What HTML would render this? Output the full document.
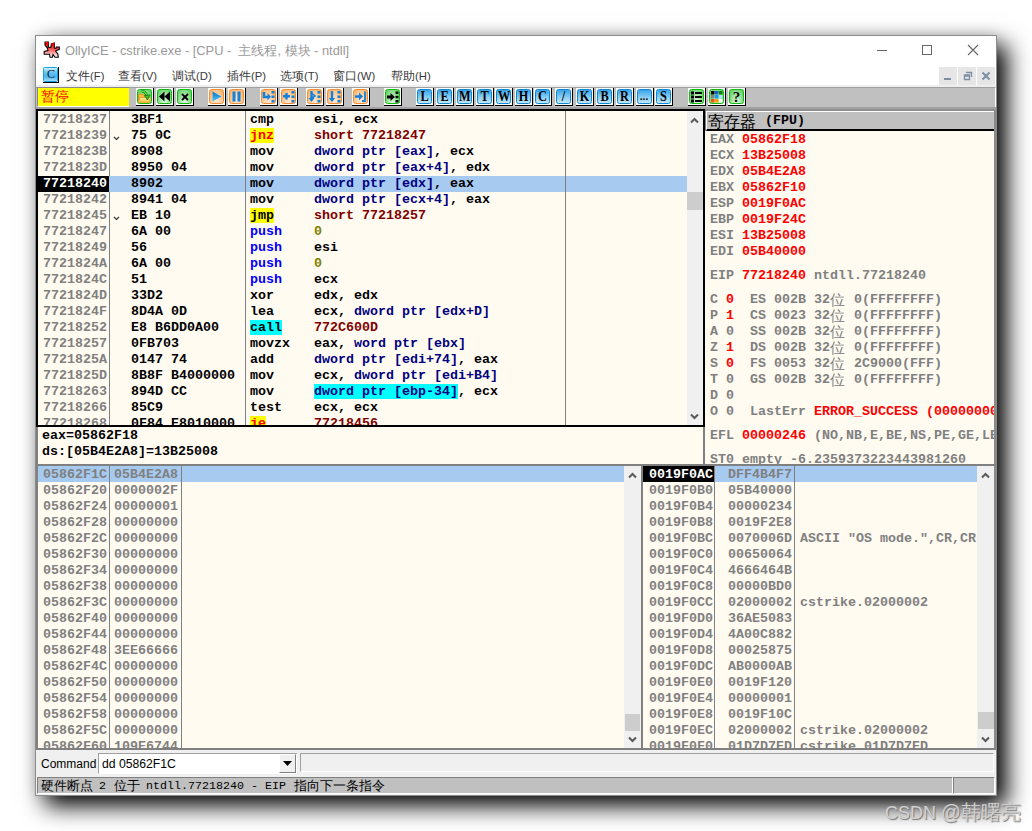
<!DOCTYPE html><html><head><meta charset="utf-8"><style>
html,body{margin:0;padding:0;}
body{width:1032px;height:831px;overflow:hidden;background:#fff;position:relative;font-family:"Liberation Sans",sans-serif;}
div{box-sizing:border-box;}
.m{position:absolute;font-family:"Liberation Mono",monospace;font-weight:bold;font-size:13.333px;line-height:16px;height:16px;white-space:pre;}
.s{position:absolute;white-space:pre;}
</style></head><body>
<div style="position:absolute;left:35px;top:35px;width:962px;height:761px;background:#fff;border:1px solid #8c8c8c;box-shadow:10px 10px 22px rgba(0,0,0,1),0 0 14px rgba(0,0,0,0.10);"></div>
<svg style="position:absolute;left:42px;top:40px" width="20" height="20" viewBox="0 0 20 20">
<defs><linearGradient id="ast" x1="0" y1="0" x2="0" y2="1"><stop offset="0" stop-color="#ff0000"/><stop offset="0.45" stop-color="#ff5050"/><stop offset="1" stop-color="#ffffff"/></linearGradient></defs>
<path d="M3 2 L6.3 2 L6.3 7 L8.8 7.5 L9.3 4 L12.3 3 L12.3 8 L14 8.3 L14.3 7 L17.3 7 L17.3 9.3 L13.5 11 L15.8 14 L16.3 17.3 L13 17.3 L11 14.5 L10.3 17.3 L8 17.3 L7.5 14.3 L2.2 14.3 L2.2 11.5 L6 10.5 L5.5 8.3 L3 5 Z" fill="url(#ast)" stroke="#000" stroke-width="1.1" stroke-linejoin="miter"/>
<path d="M3 2 L6.3 2 L6.3 5 L4.5 4.5Z M9.5 3.3 L12.3 3 L12.3 6 L10 6Z" fill="#ff0000"/>
</svg>
<div class="s" style="left:65px;top:42px;font-size:12.85px;line-height:17px;color:#999;">OllyICE - cstrike.exe - [CPU -&nbsp; 主线程, 模块 - ntdll]</div>
<div style="position:absolute;left:877px;top:50px;width:10px;height:1px;background:#666;"></div>
<div style="position:absolute;left:922px;top:45px;width:10px;height:10px;border:1px solid #666;"></div>
<svg style="position:absolute;left:967px;top:44px" width="12" height="12" viewBox="0 0 12 12"><path d="M1 1 L11 11 M11 1 L1 11" stroke="#666" stroke-width="1.1"/></svg>
<div style="position:absolute;left:43px;top:67px;width:16px;height:16px;border-right:1px solid #000;border-bottom:1px solid #000;"><div style="position:absolute;left:0;top:0;width:15px;height:15px;border:1px solid #12a0ea;border-radius:1.5px;background:linear-gradient(#d8f2fd,#6cc8f4 30%,#48b4ee 65%,#a8dcf8);"></div></div>
<div class="s" style="left:47px;top:67px;font-family:'Liberation Serif',serif;font-weight:normal;font-size:12px;line-height:15px;color:#102030;">C</div>
<div class="s" style="left:66px;top:68px;font-size:12.3px;line-height:17px;color:#3a3a3a;">文件<span style="font-size:11.3px;">(F)</span></div>
<div class="s" style="left:118px;top:68px;font-size:12.3px;line-height:17px;color:#3a3a3a;">查看<span style="font-size:11.3px;">(V)</span></div>
<div class="s" style="left:172px;top:68px;font-size:12.3px;line-height:17px;color:#3a3a3a;">调试<span style="font-size:11.3px;">(D)</span></div>
<div class="s" style="left:227px;top:68px;font-size:12.3px;line-height:17px;color:#3a3a3a;">插件<span style="font-size:11.3px;">(P)</span></div>
<div class="s" style="left:280px;top:68px;font-size:12.3px;line-height:17px;color:#3a3a3a;">选项<span style="font-size:11.3px;">(T)</span></div>
<div class="s" style="left:333px;top:68px;font-size:12.3px;line-height:17px;color:#3a3a3a;">窗口<span style="font-size:11.3px;">(W)</span></div>
<div class="s" style="left:391px;top:68px;font-size:12.3px;line-height:17px;color:#3a3a3a;">帮助<span style="font-size:11.3px;">(H)</span></div>
<div style="position:absolute;left:939px;top:67px;width:18px;height:18px;background:#e6e6e6;"></div>
<div style="position:absolute;left:958px;top:67px;width:18px;height:18px;background:#e6e6e6;"></div>
<div style="position:absolute;left:977px;top:67px;width:18px;height:18px;background:#e6e6e6;"></div>
<div style="position:absolute;left:944px;top:78px;width:7px;height:2px;background:#7d8ea3;"></div>
<svg style="position:absolute;left:963px;top:71px" width="10" height="10" viewBox="0 0 10 10"><path d="M3 1.5 H8.5 V6 M1.5 4 H6.5 V8.5 H1.5 Z M1.5 5 H6.5" stroke="#7d8ea3" stroke-width="1.3" fill="none"/></svg>
<svg style="position:absolute;left:981px;top:71px" width="10" height="10" viewBox="0 0 10 10"><path d="M1.5 1.5 L8.5 8.5 M8.5 1.5 L1.5 8.5" stroke="#7d8ea3" stroke-width="2"/></svg>
<div style="position:absolute;left:36px;top:85px;width:960px;height:2px;background:#eeeeee;"></div>
<div style="position:absolute;left:36px;top:87px;width:960px;height:21px;background:#c0c0c0;border-top:1px solid #a0a0a0;border-bottom:1px solid #fff;border-right:1px solid #fff;"></div>
<div style="position:absolute;left:37px;top:87px;width:92px;height:20px;background:#ffff00;border-top:1px solid #888;border-left:1px solid #888;border-bottom:1px solid #fff;"></div>
<div class="s" style="left:41px;top:87px;font-size:14px;line-height:18px;color:#ff0000;">暂停</div>
<div style="position:absolute;left:136px;top:88px;width:18px;height:18px;background:#fff;border-right:1px solid #000;border-bottom:1px solid #000;"><div style="position:absolute;left:1px;top:1px;width:15px;height:15px;border:1px solid #10b810;border-radius:2.5px;background:radial-gradient(ellipse at 50% 100%,#e0f8e0 0%,#a8e8a8 45%,#50cc50 100%);overflow:hidden;"><svg width="13" height="13" style="position:absolute;left:0;top:0"><defs><linearGradient id="fo" x1="0" y1="0" x2="0" y2="1"><stop offset="0" stop-color="#fff0a0"/><stop offset="1" stop-color="#f0b830"/></linearGradient></defs><path d="M0.5 13 V5 Q0.5 4 1.5 4 H4 L5 5 H7 V13Z" fill="#f0c040" stroke="#d89010" stroke-width="0.9"/><path d="M1.5 7.5 H12.5 L11.5 13 H0.5Z" fill="url(#fo)" stroke="#e0a020" stroke-width="0.9"/><path d="M3.5 1.5 Q7.5 1 9 6" stroke="#108010" stroke-width="2.6" fill="none"/><path d="M3.5 1.5 Q7.5 1 9 6" stroke="#60e040" stroke-width="1.2" fill="none"/><path d="M6.5 5.5 L12 5 L9.5 10Z" fill="#40c030" stroke="#107010" stroke-width="0.8"/></svg></div></div>
<div style="position:absolute;left:156px;top:88px;width:18px;height:18px;background:#fff;border-right:1px solid #000;border-bottom:1px solid #000;"><div style="position:absolute;left:1px;top:1px;width:15px;height:15px;border:1px solid #10b810;border-radius:2.5px;background:radial-gradient(ellipse at 50% 100%,#e0f8e0 0%,#a8e8a8 45%,#50cc50 100%);overflow:hidden;"><svg width="13" height="13" style="position:absolute;left:0;top:0"><path d="M6.5 1.5 L1 6.5 L6.5 11.5Z M12 1.5 L6.5 6.5 L12 11.5Z" fill="#000"/></svg></div></div>
<div style="position:absolute;left:176px;top:88px;width:18px;height:18px;background:#fff;border-right:1px solid #000;border-bottom:1px solid #000;"><div style="position:absolute;left:1px;top:1px;width:15px;height:15px;border:1px solid #10b810;border-radius:2.5px;background:radial-gradient(ellipse at 50% 100%,#e0f8e0 0%,#a8e8a8 45%,#50cc50 100%);overflow:hidden;"><svg width="14" height="14" style="position:absolute;left:0;top:0"><path d="M4 4 L10 10 M10 4 L4 10" stroke="#000" stroke-width="1.8"/></svg></div></div>
<div style="position:absolute;left:208px;top:88px;width:18px;height:18px;background:#fff;border-right:1px solid #000;border-bottom:1px solid #000;"><div style="position:absolute;left:1px;top:1px;width:15px;height:15px;border:1px solid #f28c34;border-radius:2.5px;background:radial-gradient(ellipse at 50% 85%,#fee8d4 0%,#fbcc9a 55%,#f5aa5c 100%);overflow:hidden;"><svg width="13" height="13" style="position:absolute;left:0;top:0"><defs><linearGradient id="bl" x1="0" y1="0" x2="0" y2="1"><stop offset="0" stop-color="#0870c8"/><stop offset="1" stop-color="#50c8f8"/></linearGradient></defs><path d="M2.5 1.5 L11.5 6.5 L2.5 11.5Z" fill="url(#bl)"/></svg></div></div>
<div style="position:absolute;left:228px;top:88px;width:18px;height:18px;background:#fff;border-right:1px solid #000;border-bottom:1px solid #000;"><div style="position:absolute;left:1px;top:1px;width:15px;height:15px;border:1px solid #f28c34;border-radius:2.5px;background:radial-gradient(ellipse at 50% 85%,#fee8d4 0%,#fbcc9a 55%,#f5aa5c 100%);overflow:hidden;"><svg width="13" height="13" style="position:absolute;left:0;top:0"><rect x="2.5" y="1.5" width="3" height="10" fill="#1580d8"/><rect x="7.5" y="1.5" width="3" height="10" fill="#1580d8"/></svg></div></div>
<div style="position:absolute;left:260px;top:88px;width:18px;height:18px;background:#fff;border-right:1px solid #000;border-bottom:1px solid #000;"><div style="position:absolute;left:1px;top:1px;width:15px;height:15px;border:1px solid #f28c34;border-radius:2.5px;background:radial-gradient(ellipse at 50% 85%,#fee8d4 0%,#fbcc9a 55%,#f5aa5c 100%);overflow:hidden;"><svg width="13" height="13" style="position:absolute;left:0;top:0"><path d="M2 2 v5 h4" stroke="#1580d8" stroke-width="2.6" fill="none"/><path d="M5.5 3 L9 6.8 L5.5 10.5Z" fill="#1580d8"/><rect x="9.5" y="1" width="3" height="2.5" fill="#1580d8"/><rect x="9.5" y="5.5" width="3" height="2.5" fill="#1580d8"/><rect x="9.5" y="10" width="3" height="2.5" fill="#1580d8"/></svg></div></div>
<div style="position:absolute;left:280px;top:88px;width:18px;height:18px;background:#fff;border-right:1px solid #000;border-bottom:1px solid #000;"><div style="position:absolute;left:1px;top:1px;width:15px;height:15px;border:1px solid #f28c34;border-radius:2.5px;background:radial-gradient(ellipse at 50% 85%,#fee8d4 0%,#fbcc9a 55%,#f5aa5c 100%);overflow:hidden;"><svg width="13" height="13" style="position:absolute;left:0;top:0"><path d="M1 6.3 h7 M4.5 3 v6.5" stroke="#1580d8" stroke-width="2.4"/><rect x="9.5" y="1" width="3" height="2.5" fill="#1580d8"/><rect x="9.5" y="5.5" width="3" height="2.5" fill="#1580d8"/><rect x="9.5" y="10" width="3" height="2.5" fill="#1580d8"/></svg></div></div>
<div style="position:absolute;left:306px;top:88px;width:18px;height:18px;background:#fff;border-right:1px solid #000;border-bottom:1px solid #000;"><div style="position:absolute;left:1px;top:1px;width:15px;height:15px;border:1px solid #f28c34;border-radius:2.5px;background:radial-gradient(ellipse at 50% 85%,#fee8d4 0%,#fbcc9a 55%,#f5aa5c 100%);overflow:hidden;"><svg width="13" height="13" style="position:absolute;left:0;top:0"><path d="M3.5 1 v8" stroke="#1580d8" stroke-width="2.4"/><path d="M0.5 8 L3.5 12 L6.5 8Z" fill="#1580d8"/><path d="M4 3.5 L7 6 L4 8" stroke="#1580d8" stroke-width="1.6" fill="none"/><rect x="9.5" y="1" width="3" height="2.5" fill="#1580d8"/><rect x="9.5" y="5.5" width="3" height="2.5" fill="#1580d8"/><rect x="9.5" y="10" width="3" height="2.5" fill="#1580d8"/></svg></div></div>
<div style="position:absolute;left:326px;top:88px;width:18px;height:18px;background:#fff;border-right:1px solid #000;border-bottom:1px solid #000;"><div style="position:absolute;left:1px;top:1px;width:15px;height:15px;border:1px solid #f28c34;border-radius:2.5px;background:radial-gradient(ellipse at 50% 85%,#fee8d4 0%,#fbcc9a 55%,#f5aa5c 100%);overflow:hidden;"><svg width="13" height="13" style="position:absolute;left:0;top:0"><path d="M4 1 v8" stroke="#1580d8" stroke-width="2.4"/><path d="M0.8 8 L4 12 L7.2 8Z" fill="#1580d8"/><rect x="9.5" y="1" width="3" height="2.5" fill="#1580d8"/><rect x="9.5" y="5.5" width="3" height="2.5" fill="#1580d8"/><rect x="9.5" y="10" width="3" height="2.5" fill="#1580d8"/></svg></div></div>
<div style="position:absolute;left:352px;top:88px;width:18px;height:18px;background:#fff;border-right:1px solid #000;border-bottom:1px solid #000;"><div style="position:absolute;left:1px;top:1px;width:15px;height:15px;border:1px solid #f28c34;border-radius:2.5px;background:radial-gradient(ellipse at 50% 85%,#fee8d4 0%,#fbcc9a 55%,#f5aa5c 100%);overflow:hidden;"><svg width="13" height="13" style="position:absolute;left:0;top:0"><path d="M1 6.5 h5" stroke="#1580d8" stroke-width="2.6"/><path d="M5 2.5 L9 6.5 L5 10.5Z" fill="#1580d8"/><path d="M11 1.5 v9.5 h-3" stroke="#1580d8" stroke-width="1.8" fill="none"/></svg></div></div>
<div style="position:absolute;left:384px;top:88px;width:18px;height:18px;background:#fff;border-right:1px solid #000;border-bottom:1px solid #000;"><div style="position:absolute;left:1px;top:1px;width:15px;height:15px;border:1px solid #10b810;border-radius:2.5px;background:radial-gradient(ellipse at 50% 100%,#e0f8e0 0%,#a8e8a8 45%,#50cc50 100%);overflow:hidden;"><svg width="13" height="13" style="position:absolute;left:0;top:0"><path d="M1 7 h4.5" stroke="#000" stroke-width="3"/><path d="M4.5 3 L9 7 L4.5 11Z" fill="#000"/><rect x="9.5" y="1.5" width="3" height="2.5" fill="#000"/><rect x="9.5" y="5.8" width="3" height="2.5" fill="#000"/><rect x="9.5" y="10" width="3" height="2.5" fill="#000"/></svg></div></div>
<div style="position:absolute;left:416px;top:88px;width:18px;height:18px;background:#fff;border-right:1px solid #000;border-bottom:1px solid #000;"><div style="position:absolute;left:1px;top:1px;width:15px;height:15px;border:1px solid #0a86d6;border-radius:2.5px;background:linear-gradient(#3aa4ea,#8ed0f6 60%,#c4e8fb);overflow:hidden;"><div style="position:absolute;left:0;top:-1px;width:13px;height:14px;text-align:center;font-family:'Liberation Serif',serif;font-weight:bold;font-size:14.5px;line-height:14px;color:#000;transform:scaleX(0.85);">L</div></div></div>
<div style="position:absolute;left:436px;top:88px;width:18px;height:18px;background:#fff;border-right:1px solid #000;border-bottom:1px solid #000;"><div style="position:absolute;left:1px;top:1px;width:15px;height:15px;border:1px solid #0a86d6;border-radius:2.5px;background:linear-gradient(#3aa4ea,#8ed0f6 60%,#c4e8fb);overflow:hidden;"><div style="position:absolute;left:0;top:-1px;width:13px;height:14px;text-align:center;font-family:'Liberation Serif',serif;font-weight:bold;font-size:14.5px;line-height:14px;color:#000;transform:scaleX(0.85);">E</div></div></div>
<div style="position:absolute;left:456px;top:88px;width:18px;height:18px;background:#fff;border-right:1px solid #000;border-bottom:1px solid #000;"><div style="position:absolute;left:1px;top:1px;width:15px;height:15px;border:1px solid #0a86d6;border-radius:2.5px;background:linear-gradient(#3aa4ea,#8ed0f6 60%,#c4e8fb);overflow:hidden;"><div style="position:absolute;left:0;top:-1px;width:13px;height:14px;text-align:center;font-family:'Liberation Serif',serif;font-weight:bold;font-size:14.5px;line-height:14px;color:#000;transform:scaleX(0.85);">M</div></div></div>
<div style="position:absolute;left:476px;top:88px;width:18px;height:18px;background:#fff;border-right:1px solid #000;border-bottom:1px solid #000;"><div style="position:absolute;left:1px;top:1px;width:15px;height:15px;border:1px solid #0a86d6;border-radius:2.5px;background:linear-gradient(#3aa4ea,#8ed0f6 60%,#c4e8fb);overflow:hidden;"><div style="position:absolute;left:0;top:-1px;width:13px;height:14px;text-align:center;font-family:'Liberation Serif',serif;font-weight:bold;font-size:14.5px;line-height:14px;color:#000;transform:scaleX(0.85);">T</div></div></div>
<div style="position:absolute;left:495px;top:88px;width:18px;height:18px;background:#fff;border-right:1px solid #000;border-bottom:1px solid #000;"><div style="position:absolute;left:1px;top:1px;width:15px;height:15px;border:1px solid #0a86d6;border-radius:2.5px;background:linear-gradient(#3aa4ea,#8ed0f6 60%,#c4e8fb);overflow:hidden;"><div style="position:absolute;left:0;top:-1px;width:13px;height:14px;text-align:center;font-family:'Liberation Serif',serif;font-weight:bold;font-size:14.5px;line-height:14px;color:#000;transform:scaleX(0.85);">W</div></div></div>
<div style="position:absolute;left:515px;top:88px;width:18px;height:18px;background:#fff;border-right:1px solid #000;border-bottom:1px solid #000;"><div style="position:absolute;left:1px;top:1px;width:15px;height:15px;border:1px solid #0a86d6;border-radius:2.5px;background:linear-gradient(#3aa4ea,#8ed0f6 60%,#c4e8fb);overflow:hidden;"><div style="position:absolute;left:0;top:-1px;width:13px;height:14px;text-align:center;font-family:'Liberation Serif',serif;font-weight:bold;font-size:14.5px;line-height:14px;color:#000;transform:scaleX(0.85);">H</div></div></div>
<div style="position:absolute;left:534px;top:88px;width:18px;height:18px;background:#fff;border-right:1px solid #000;border-bottom:1px solid #000;"><div style="position:absolute;left:1px;top:1px;width:15px;height:15px;border:1px solid #0a86d6;border-radius:2.5px;background:linear-gradient(#3aa4ea,#8ed0f6 60%,#c4e8fb);overflow:hidden;"><div style="position:absolute;left:0;top:-1px;width:13px;height:14px;text-align:center;font-family:'Liberation Serif',serif;font-weight:bold;font-size:14.5px;line-height:14px;color:#000;transform:scaleX(0.85);">C</div></div></div>
<div style="position:absolute;left:555px;top:88px;width:18px;height:18px;background:#fff;border-right:1px solid #000;border-bottom:1px solid #000;"><div style="position:absolute;left:1px;top:1px;width:15px;height:15px;border:1px solid #0a86d6;border-radius:2.5px;background:linear-gradient(#3aa4ea,#8ed0f6 60%,#c4e8fb);overflow:hidden;"><div style="position:absolute;left:0;top:-1px;width:13px;height:14px;text-align:center;font-family:'Liberation Serif',serif;font-weight:bold;font-size:14.5px;line-height:14px;color:#000;transform:scaleX(0.85);">/</div></div></div>
<div style="position:absolute;left:576px;top:88px;width:18px;height:18px;background:#fff;border-right:1px solid #000;border-bottom:1px solid #000;"><div style="position:absolute;left:1px;top:1px;width:15px;height:15px;border:1px solid #0a86d6;border-radius:2.5px;background:linear-gradient(#3aa4ea,#8ed0f6 60%,#c4e8fb);overflow:hidden;"><div style="position:absolute;left:0;top:-1px;width:13px;height:14px;text-align:center;font-family:'Liberation Serif',serif;font-weight:bold;font-size:14.5px;line-height:14px;color:#000;transform:scaleX(0.85);">K</div></div></div>
<div style="position:absolute;left:596px;top:88px;width:18px;height:18px;background:#fff;border-right:1px solid #000;border-bottom:1px solid #000;"><div style="position:absolute;left:1px;top:1px;width:15px;height:15px;border:1px solid #0a86d6;border-radius:2.5px;background:linear-gradient(#3aa4ea,#8ed0f6 60%,#c4e8fb);overflow:hidden;"><div style="position:absolute;left:0;top:-1px;width:13px;height:14px;text-align:center;font-family:'Liberation Serif',serif;font-weight:bold;font-size:14.5px;line-height:14px;color:#000;transform:scaleX(0.85);">B</div></div></div>
<div style="position:absolute;left:616px;top:88px;width:18px;height:18px;background:#fff;border-right:1px solid #000;border-bottom:1px solid #000;"><div style="position:absolute;left:1px;top:1px;width:15px;height:15px;border:1px solid #0a86d6;border-radius:2.5px;background:linear-gradient(#3aa4ea,#8ed0f6 60%,#c4e8fb);overflow:hidden;"><div style="position:absolute;left:0;top:-1px;width:13px;height:14px;text-align:center;font-family:'Liberation Serif',serif;font-weight:bold;font-size:14.5px;line-height:14px;color:#000;transform:scaleX(0.85);">R</div></div></div>
<div style="position:absolute;left:636px;top:88px;width:18px;height:18px;background:#fff;border-right:1px solid #000;border-bottom:1px solid #000;"><div style="position:absolute;left:1px;top:1px;width:15px;height:15px;border:1px solid #0a86d6;border-radius:2.5px;background:linear-gradient(#3aa4ea,#8ed0f6 60%,#c4e8fb);overflow:hidden;"><div style="position:absolute;left:-1px;top:0px;width:14px;height:14px;text-align:center;font-family:'Liberation Sans',sans-serif;font-weight:bold;font-size:10px;line-height:14px;color:#000;">...</div></div></div>
<div style="position:absolute;left:655px;top:88px;width:18px;height:18px;background:#fff;border-right:1px solid #000;border-bottom:1px solid #000;"><div style="position:absolute;left:1px;top:1px;width:15px;height:15px;border:1px solid #0a86d6;border-radius:2.5px;background:linear-gradient(#3aa4ea,#8ed0f6 60%,#c4e8fb);overflow:hidden;"><div style="position:absolute;left:0;top:-1px;width:13px;height:14px;text-align:center;font-family:'Liberation Serif',serif;font-weight:bold;font-size:14.5px;line-height:14px;color:#000;transform:scaleX(0.85);">S</div></div></div>
<div style="position:absolute;left:688px;top:88px;width:18px;height:18px;background:#fff;border-right:1px solid #000;border-bottom:1px solid #000;"><div style="position:absolute;left:1px;top:1px;width:15px;height:15px;border:1px solid #10b810;border-radius:2.5px;background:radial-gradient(ellipse at 50% 100%,#e0f8e0 0%,#a8e8a8 45%,#50cc50 100%);overflow:hidden;"><svg width="13" height="13" style="position:absolute;left:0;top:0"><rect x="1" y="1.5" width="3" height="3" fill="#000"/><rect x="1" y="5.5" width="3" height="3" fill="#000"/><rect x="1" y="9.5" width="3" height="3" fill="#000"/><rect x="5" y="2" width="7" height="2" fill="#000"/><rect x="5" y="6" width="7" height="2" fill="#000"/><rect x="5" y="10" width="7" height="2" fill="#000"/></svg></div></div>
<div style="position:absolute;left:708px;top:88px;width:18px;height:18px;background:#fff;border-right:1px solid #000;border-bottom:1px solid #000;"><div style="position:absolute;left:1px;top:1px;width:15px;height:15px;border:1px solid #10b810;border-radius:2.5px;background:radial-gradient(ellipse at 50% 100%,#e0f8e0 0%,#a8e8a8 45%,#50cc50 100%);overflow:hidden;"><svg width="13" height="13" style="position:absolute;left:0;top:0"><rect x="1" y="1" width="3.5" height="3.5" fill="#000"/><rect x="5" y="1" width="3.5" height="3.5" fill="#1060d0"/><rect x="9" y="1" width="3.5" height="3.5" fill="#108010"/><rect x="1" y="5" width="3.5" height="3.5" fill="#808080"/><rect x="5" y="5" width="3.5" height="3.5" fill="#10a0f0"/><rect x="9" y="5" width="3.5" height="3.5" fill="#b0e0ff"/><rect x="1" y="9" width="3.5" height="3.5" fill="#f05010"/><rect x="5" y="9" width="3.5" height="3.5" fill="#f0a000"/><rect x="9" y="9" width="3.5" height="3.5" fill="#fff"/></svg></div></div>
<div style="position:absolute;left:728px;top:88px;width:18px;height:18px;background:#fff;border-right:1px solid #000;border-bottom:1px solid #000;"><div style="position:absolute;left:1px;top:1px;width:15px;height:15px;border:1px solid #10b810;border-radius:2.5px;background:radial-gradient(ellipse at 50% 100%,#e0f8e0 0%,#a8e8a8 45%,#50cc50 100%);overflow:hidden;"><div style="position:absolute;left:-0.5px;top:-0.5px;width:14px;height:14px;text-align:center;font-family:'Liberation Serif',serif;font-weight:bold;font-size:15px;line-height:14px;color:#000;">?</div></div></div>
<div style="position:absolute;left:36px;top:107px;width:960px;height:643px;background:#a0a0a0;"></div>
<div style="position:absolute;left:36px;top:109px;width:669px;height:318px;background:#fffbf0;border:2px solid #000;"></div>
<div style="position:absolute;left:109px;top:111px;width:1px;height:314px;background:#808080;"></div>
<div style="position:absolute;left:245px;top:111px;width:1px;height:314px;background:#808080;"></div>
<div style="position:absolute;left:565px;top:111px;width:1px;height:314px;background:#808080;"></div>
<div style="position:absolute;left:687px;top:111px;width:16px;height:314px;background:#f0f0f0;"></div>
<div style="position:absolute;left:687px;top:192px;width:16px;height:18px;background:#cdcdcd;"></div>
<svg style="position:absolute;left:690px;top:117px" width="9" height="7" viewBox="0 0 9 7"><path d="M1 5.5 L4.5 2 L8 5.5" stroke="#5a5a5a" stroke-width="2.1" fill="none"/></svg>
<svg style="position:absolute;left:690px;top:413px" width="9" height="7" viewBox="0 0 9 7"><path d="M1 1.5 L4.5 5 L8 1.5" stroke="#5a5a5a" stroke-width="2.1" fill="none"/></svg>
<div style="position:absolute;left:38px;top:111px;width:649px;height:314px;overflow:hidden;">
<div class="m" style="left:5px;top:1px;"><span style="color:#808080;">77218237</span></div>
<div class="m" style="left:93px;top:1px;"><span style="color:#000;">3BF1</span></div>
<div class="m" style="left:212px;top:1px;"><span style="color:#000;">cmp</span></div>
<div class="m" style="left:276px;top:1px;"><span style="color:#000;">esi, ecx</span></div>
<div class="m" style="left:5px;top:17px;"><span style="color:#808080;">77218239</span></div>
<svg style="position:absolute;left:75px;top:25px" width="7" height="5" viewBox="0 0 7 5"><path d="M1 1 L3.5 3.5 L6 1" stroke="#303030" stroke-width="1.1" fill="none"/></svg>
<div class="m" style="left:93px;top:17px;"><span style="color:#000;">75 0C</span></div>
<div class="m" style="left:212px;top:17px;"><span style="color:#ff0000;background:#ffff00;">jnz</span></div>
<div class="m" style="left:276px;top:17px;"><span style="color:#800000;">short 77218247</span></div>
<div class="m" style="left:5px;top:33px;"><span style="color:#808080;">7721823B</span></div>
<div class="m" style="left:93px;top:33px;"><span style="color:#000;">8908</span></div>
<div class="m" style="left:212px;top:33px;"><span style="color:#000;">mov</span></div>
<div class="m" style="left:276px;top:33px;"><span style="color:#000080;">dword ptr [eax]</span><span style="color:#000;">, ecx</span></div>
<div class="m" style="left:5px;top:49px;"><span style="color:#808080;">7721823D</span></div>
<div class="m" style="left:93px;top:49px;"><span style="color:#000;">8950 04</span></div>
<div class="m" style="left:212px;top:49px;"><span style="color:#000;">mov</span></div>
<div class="m" style="left:276px;top:49px;"><span style="color:#000080;">dword ptr [eax+4]</span><span style="color:#000;">, edx</span></div>
<div style="position:absolute;left:71px;top:65px;width:578px;height:16px;background:#a6caf0;"></div>
<div style="position:absolute;left:0px;top:65px;width:71px;height:16px;background:#000;"></div>
<div style="position:absolute;left:207px;top:65px;width:1px;height:16px;background:#808080;"></div>
<div style="position:absolute;left:527px;top:65px;width:1px;height:16px;background:#808080;"></div>
<div class="m" style="left:5px;top:65px;"><span style="color:#fff;">77218240</span></div>
<div class="m" style="left:93px;top:65px;"><span style="color:#000;">8902</span></div>
<div class="m" style="left:212px;top:65px;"><span style="color:#000;">mov</span></div>
<div class="m" style="left:276px;top:65px;"><span style="color:#000080;">dword ptr [edx]</span><span style="color:#000;">, eax</span></div>
<div class="m" style="left:5px;top:81px;"><span style="color:#808080;">77218242</span></div>
<div class="m" style="left:93px;top:81px;"><span style="color:#000;">8941 04</span></div>
<div class="m" style="left:212px;top:81px;"><span style="color:#000;">mov</span></div>
<div class="m" style="left:276px;top:81px;"><span style="color:#000080;">dword ptr [ecx+4]</span><span style="color:#000;">, eax</span></div>
<div class="m" style="left:5px;top:97px;"><span style="color:#808080;">77218245</span></div>
<svg style="position:absolute;left:75px;top:105px" width="7" height="5" viewBox="0 0 7 5"><path d="M1 1 L3.5 3.5 L6 1" stroke="#303030" stroke-width="1.1" fill="none"/></svg>
<div class="m" style="left:93px;top:97px;"><span style="color:#000;">EB 10</span></div>
<div class="m" style="left:212px;top:97px;"><span style="color:#000;background:#ffff00;">jmp</span></div>
<div class="m" style="left:276px;top:97px;"><span style="color:#800000;">short 77218257</span></div>
<div class="m" style="left:5px;top:113px;"><span style="color:#808080;">77218247</span></div>
<div class="m" style="left:93px;top:113px;"><span style="color:#000;">6A 00</span></div>
<div class="m" style="left:212px;top:113px;"><span style="color:#0000ff;">push</span></div>
<div class="m" style="left:276px;top:113px;"><span style="color:#808000;">0</span></div>
<div class="m" style="left:5px;top:129px;"><span style="color:#808080;">77218249</span></div>
<div class="m" style="left:93px;top:129px;"><span style="color:#000;">56</span></div>
<div class="m" style="left:212px;top:129px;"><span style="color:#0000ff;">push</span></div>
<div class="m" style="left:276px;top:129px;"><span style="color:#000;">esi</span></div>
<div class="m" style="left:5px;top:145px;"><span style="color:#808080;">7721824A</span></div>
<div class="m" style="left:93px;top:145px;"><span style="color:#000;">6A 00</span></div>
<div class="m" style="left:212px;top:145px;"><span style="color:#0000ff;">push</span></div>
<div class="m" style="left:276px;top:145px;"><span style="color:#808000;">0</span></div>
<div class="m" style="left:5px;top:161px;"><span style="color:#808080;">7721824C</span></div>
<div class="m" style="left:93px;top:161px;"><span style="color:#000;">51</span></div>
<div class="m" style="left:212px;top:161px;"><span style="color:#0000ff;">push</span></div>
<div class="m" style="left:276px;top:161px;"><span style="color:#000;">ecx</span></div>
<div class="m" style="left:5px;top:177px;"><span style="color:#808080;">7721824D</span></div>
<div class="m" style="left:93px;top:177px;"><span style="color:#000;">33D2</span></div>
<div class="m" style="left:212px;top:177px;"><span style="color:#000;">xor</span></div>
<div class="m" style="left:276px;top:177px;"><span style="color:#000;">edx, edx</span></div>
<div class="m" style="left:5px;top:193px;"><span style="color:#808080;">7721824F</span></div>
<div class="m" style="left:93px;top:193px;"><span style="color:#000;">8D4A 0D</span></div>
<div class="m" style="left:212px;top:193px;"><span style="color:#000;">lea</span></div>
<div class="m" style="left:276px;top:193px;"><span style="color:#000;">ecx, </span><span style="color:#000080;">dword ptr [edx+D]</span></div>
<div class="m" style="left:5px;top:209px;"><span style="color:#808080;">77218252</span></div>
<div class="m" style="left:93px;top:209px;"><span style="color:#000;">E8 B6DD0A00</span></div>
<div class="m" style="left:212px;top:209px;"><span style="color:#000;background:#00ffff;">call</span></div>
<div class="m" style="left:276px;top:209px;"><span style="color:#800000;">772C600D</span></div>
<div class="m" style="left:5px;top:225px;"><span style="color:#808080;">77218257</span></div>
<div class="m" style="left:93px;top:225px;"><span style="color:#000;">0FB703</span></div>
<div class="m" style="left:212px;top:225px;"><span style="color:#000;">movzx</span></div>
<div class="m" style="left:276px;top:225px;"><span style="color:#000;">eax, </span><span style="color:#000080;">word ptr [ebx]</span></div>
<div class="m" style="left:5px;top:241px;"><span style="color:#808080;">7721825A</span></div>
<div class="m" style="left:93px;top:241px;"><span style="color:#000;">0147 74</span></div>
<div class="m" style="left:212px;top:241px;"><span style="color:#000;">add</span></div>
<div class="m" style="left:276px;top:241px;"><span style="color:#000080;">dword ptr [edi+74]</span><span style="color:#000;">, eax</span></div>
<div class="m" style="left:5px;top:257px;"><span style="color:#808080;">7721825D</span></div>
<div class="m" style="left:93px;top:257px;"><span style="color:#000;">8B8F B4000000</span></div>
<div class="m" style="left:212px;top:257px;"><span style="color:#000;">mov</span></div>
<div class="m" style="left:276px;top:257px;"><span style="color:#000;">ecx, </span><span style="color:#000080;">dword ptr [edi+B4]</span></div>
<div class="m" style="left:5px;top:273px;"><span style="color:#808080;">77218263</span></div>
<div class="m" style="left:93px;top:273px;"><span style="color:#000;">894D CC</span></div>
<div class="m" style="left:212px;top:273px;"><span style="color:#000;">mov</span></div>
<div class="m" style="left:276px;top:273px;"><span style="color:#000080;background:#00ffff;">dword ptr [ebp-34]</span><span style="color:#000;">, ecx</span></div>
<div class="m" style="left:5px;top:289px;"><span style="color:#808080;">77218266</span></div>
<div class="m" style="left:93px;top:289px;"><span style="color:#000;">85C9</span></div>
<div class="m" style="left:212px;top:289px;"><span style="color:#000;">test</span></div>
<div class="m" style="left:276px;top:289px;"><span style="color:#000;">ecx, ecx</span></div>
<div class="m" style="left:5px;top:305px;"><span style="color:#808080;">77218268</span></div>
<div class="m" style="left:93px;top:305px;"><span style="color:#000;">0F84 E8010000</span></div>
<div class="m" style="left:212px;top:305px;"><span style="color:#ff0000;background:#ffff00;">je</span></div>
<div class="m" style="left:276px;top:305px;"><span style="color:#800000;">77218456</span></div>
</div>
<div style="position:absolute;left:36px;top:427px;width:669px;height:38px;background:#fffbf0;border-left:2px solid #808080;"></div>
<div style="position:absolute;left:703px;top:427px;width:2px;height:38px;background:#808080;"></div>
<div class="m" style="left:42px;top:428px;"><span style="color:#000;">eax=05862F18</span></div>
<div class="m" style="left:42px;top:444px;"><span style="color:#000;">ds:[05B4E2A8]=13B25008</span></div>
<div style="position:absolute;left:705px;top:109px;width:291px;height:356px;background:#fffbf0;border-top:2px solid #909090;border-right:2px solid #8a8a8a;"></div>
<div style="position:absolute;left:705px;top:109px;width:1px;height:22px;background:#808080;"></div>
<div style="position:absolute;left:706px;top:111px;width:288px;height:20px;background:#c0c0c0;border-top:1px solid #fff;border-left:1px solid #fff;border-bottom:2px solid #000;"></div>
<div class="s" style="left:708px;top:112px;font-size:16px;line-height:19px;color:#000;">寄存器</div>
<div class="m" style="left:765px;top:113px;"><span style="color:#000;">(FPU)</span></div>
<div class="m" style="left:710px;top:132px;"><span style="color:#808080;">EAX </span><span style="color:#ff0000;">05862F18</span></div>
<div class="m" style="left:710px;top:148px;"><span style="color:#808080;">ECX </span><span style="color:#ff0000;">13B25008</span></div>
<div class="m" style="left:710px;top:164px;"><span style="color:#808080;">EDX </span><span style="color:#ff0000;">05B4E2A8</span></div>
<div class="m" style="left:710px;top:180px;"><span style="color:#808080;">EBX </span><span style="color:#ff0000;">05862F10</span></div>
<div class="m" style="left:710px;top:196px;"><span style="color:#808080;">ESP </span><span style="color:#ff0000;">0019F0AC</span></div>
<div class="m" style="left:710px;top:212px;"><span style="color:#808080;">EBP </span><span style="color:#ff0000;">0019F24C</span></div>
<div class="m" style="left:710px;top:228px;"><span style="color:#808080;">ESI </span><span style="color:#ff0000;">13B25008</span></div>
<div class="m" style="left:710px;top:244px;"><span style="color:#808080;">EDI </span><span style="color:#ff0000;">05B40000</span></div>
<div class="m" style="left:710px;top:268px;"><span style="color:#808080;">EIP </span><span style="color:#ff0000;">77218240</span><span style="color:#808080;"> ntdll.77218240</span></div>
<div class="m" style="left:710px;top:292px;"><span style="color:#808080;">C </span><span style="color:#ff0000;">0</span><span style="color:#808080;">  ES 002B 32</span></div>
<div class="s" style="left:830px;top:292px;font-size:15px;line-height:16px;color:#808080;width:16px;">位</div>
<div class="m" style="left:854px;top:292px;"><span style="color:#808080;">0(FFFFFFFF)</span></div>
<div class="m" style="left:710px;top:308px;"><span style="color:#808080;">P </span><span style="color:#ff0000;">1</span><span style="color:#808080;">  CS 0023 32</span></div>
<div class="s" style="left:830px;top:308px;font-size:15px;line-height:16px;color:#808080;width:16px;">位</div>
<div class="m" style="left:854px;top:308px;"><span style="color:#808080;">0(FFFFFFFF)</span></div>
<div class="m" style="left:710px;top:324px;"><span style="color:#808080;">A </span><span style="color:#808080;">0</span><span style="color:#808080;">  SS 002B 32</span></div>
<div class="s" style="left:830px;top:324px;font-size:15px;line-height:16px;color:#808080;width:16px;">位</div>
<div class="m" style="left:854px;top:324px;"><span style="color:#808080;">0(FFFFFFFF)</span></div>
<div class="m" style="left:710px;top:340px;"><span style="color:#808080;">Z </span><span style="color:#ff0000;">1</span><span style="color:#808080;">  DS 002B 32</span></div>
<div class="s" style="left:830px;top:340px;font-size:15px;line-height:16px;color:#808080;width:16px;">位</div>
<div class="m" style="left:854px;top:340px;"><span style="color:#808080;">0(FFFFFFFF)</span></div>
<div class="m" style="left:710px;top:356px;"><span style="color:#808080;">S </span><span style="color:#ff0000;">0</span><span style="color:#808080;">  FS 0053 32</span></div>
<div class="s" style="left:830px;top:356px;font-size:15px;line-height:16px;color:#808080;width:16px;">位</div>
<div class="m" style="left:854px;top:356px;"><span style="color:#808080;">2C9000(FFF)</span></div>
<div class="m" style="left:710px;top:372px;"><span style="color:#808080;">T </span><span style="color:#808080;">0</span><span style="color:#808080;">  GS 002B 32</span></div>
<div class="s" style="left:830px;top:372px;font-size:15px;line-height:16px;color:#808080;width:16px;">位</div>
<div class="m" style="left:854px;top:372px;"><span style="color:#808080;">0(FFFFFFFF)</span></div>
<div class="m" style="left:710px;top:388px;"><span style="color:#808080;">D 0</span></div>
<div class="m" style="left:710px;top:404px;width:284px;overflow:hidden;"><span style="color:#808080;">O 0  LastErr </span><span style="color:#ff0000;">ERROR_SUCCESS (00000000)</span></div>
<div class="m" style="left:710px;top:428px;width:284px;overflow:hidden;"><span style="color:#808080;">EFL </span><span style="color:#ff0000;">00000246</span><span style="color:#808080;"> (NO,NB,E,BE,NS,PE,GE,LE)</span></div>
<div class="m" style="left:710px;top:452px;"><span style="color:#808080;">ST0 empty -6.2359373223443981260</span></div>
<div style="position:absolute;left:36px;top:464px;width:960px;height:2px;background:#808080;"></div>
<div style="position:absolute;left:36px;top:466px;width:607px;height:284px;background:#fffbf0;border-left:2px solid #808080;border-bottom:2px solid #808080;"></div>
<div style="position:absolute;left:38px;top:466px;width:586px;height:282px;overflow:hidden;">
<div style="position:absolute;left:0;top:0;width:586px;height:16px;background:#a6caf0;"></div>
<div style="position:absolute;left:71px;top:0;width:1px;height:282px;background:#808080;"></div>
<div style="position:absolute;left:143px;top:0;width:1px;height:282px;background:#808080;"></div>
<div class="m" style="left:5px;top:1px;"><span style="color:#808080;">05862F1C</span></div>
<div class="m" style="left:76px;top:1px;"><span style="color:#808080;">05B4E2A8</span></div>
<div class="m" style="left:5px;top:17px;"><span style="color:#808080;">05862F20</span></div>
<div class="m" style="left:76px;top:17px;"><span style="color:#808080;">0000002F</span></div>
<div class="m" style="left:5px;top:33px;"><span style="color:#808080;">05862F24</span></div>
<div class="m" style="left:76px;top:33px;"><span style="color:#808080;">00000001</span></div>
<div class="m" style="left:5px;top:49px;"><span style="color:#808080;">05862F28</span></div>
<div class="m" style="left:76px;top:49px;"><span style="color:#808080;">00000000</span></div>
<div class="m" style="left:5px;top:65px;"><span style="color:#808080;">05862F2C</span></div>
<div class="m" style="left:76px;top:65px;"><span style="color:#808080;">00000000</span></div>
<div class="m" style="left:5px;top:81px;"><span style="color:#808080;">05862F30</span></div>
<div class="m" style="left:76px;top:81px;"><span style="color:#808080;">00000000</span></div>
<div class="m" style="left:5px;top:97px;"><span style="color:#808080;">05862F34</span></div>
<div class="m" style="left:76px;top:97px;"><span style="color:#808080;">00000000</span></div>
<div class="m" style="left:5px;top:113px;"><span style="color:#808080;">05862F38</span></div>
<div class="m" style="left:76px;top:113px;"><span style="color:#808080;">00000000</span></div>
<div class="m" style="left:5px;top:129px;"><span style="color:#808080;">05862F3C</span></div>
<div class="m" style="left:76px;top:129px;"><span style="color:#808080;">00000000</span></div>
<div class="m" style="left:5px;top:145px;"><span style="color:#808080;">05862F40</span></div>
<div class="m" style="left:76px;top:145px;"><span style="color:#808080;">00000000</span></div>
<div class="m" style="left:5px;top:161px;"><span style="color:#808080;">05862F44</span></div>
<div class="m" style="left:76px;top:161px;"><span style="color:#808080;">00000000</span></div>
<div class="m" style="left:5px;top:177px;"><span style="color:#808080;">05862F48</span></div>
<div class="m" style="left:76px;top:177px;"><span style="color:#808080;">3EE66666</span></div>
<div class="m" style="left:5px;top:193px;"><span style="color:#808080;">05862F4C</span></div>
<div class="m" style="left:76px;top:193px;"><span style="color:#808080;">00000000</span></div>
<div class="m" style="left:5px;top:209px;"><span style="color:#808080;">05862F50</span></div>
<div class="m" style="left:76px;top:209px;"><span style="color:#808080;">00000000</span></div>
<div class="m" style="left:5px;top:225px;"><span style="color:#808080;">05862F54</span></div>
<div class="m" style="left:76px;top:225px;"><span style="color:#808080;">00000000</span></div>
<div class="m" style="left:5px;top:241px;"><span style="color:#808080;">05862F58</span></div>
<div class="m" style="left:76px;top:241px;"><span style="color:#808080;">00000000</span></div>
<div class="m" style="left:5px;top:257px;"><span style="color:#808080;">05862F5C</span></div>
<div class="m" style="left:76px;top:257px;"><span style="color:#808080;">00000000</span></div>
<div class="m" style="left:5px;top:273px;"><span style="color:#808080;">05862F60</span></div>
<div class="m" style="left:76px;top:273px;"><span style="color:#808080;">109E6744</span></div>
</div>
<div style="position:absolute;left:624px;top:466px;width:17px;height:282px;background:#f0f0f0;"></div>
<div style="position:absolute;left:625px;top:714px;width:15px;height:17px;background:#cdcdcd;"></div>
<svg style="position:absolute;left:628px;top:472px" width="9" height="7" viewBox="0 0 9 7"><path d="M1 5.5 L4.5 2 L8 5.5" stroke="#5a5a5a" stroke-width="2.1" fill="none"/></svg>
<svg style="position:absolute;left:628px;top:736px" width="9" height="7" viewBox="0 0 9 7"><path d="M1 1.5 L4.5 5 L8 1.5" stroke="#5a5a5a" stroke-width="2.1" fill="none"/></svg>
<div style="position:absolute;left:641px;top:466px;width:2px;height:284px;background:#808080;"></div>
<div style="position:absolute;left:643px;top:466px;width:353px;height:284px;background:#fffbf0;border-right:2px solid #8a8a8a;border-bottom:2px solid #808080;"></div>
<div style="position:absolute;left:643px;top:466px;width:334px;height:282px;overflow:hidden;">
<div style="position:absolute;left:72px;top:0;width:262px;height:16px;background:#a6caf0;"></div>
<div style="position:absolute;left:0;top:0;width:71px;height:16px;background:#000;"></div>
<div style="position:absolute;left:71px;top:0;width:1px;height:282px;background:#808080;"></div>
<div style="position:absolute;left:151px;top:0;width:1px;height:282px;background:#808080;"></div>
<div class="m" style="left:6px;top:1px;"><span style="color:#fff;">0019F0AC</span></div>
<div class="m" style="left:85px;top:1px;"><span style="color:#808080;">DFF4B4F7</span></div>
<div class="m" style="left:6px;top:17px;"><span style="color:#808080;">0019F0B0</span></div>
<div class="m" style="left:85px;top:17px;"><span style="color:#808080;">05B40000</span></div>
<div class="m" style="left:6px;top:33px;"><span style="color:#808080;">0019F0B4</span></div>
<div class="m" style="left:85px;top:33px;"><span style="color:#808080;">00000234</span></div>
<div class="m" style="left:6px;top:49px;"><span style="color:#808080;">0019F0B8</span></div>
<div class="m" style="left:85px;top:49px;"><span style="color:#808080;">0019F2E8</span></div>
<div class="m" style="left:6px;top:65px;"><span style="color:#808080;">0019F0BC</span></div>
<div class="m" style="left:85px;top:65px;"><span style="color:#808080;">0070006D</span></div>
<div class="m" style="left:157px;top:65px;"><span style="color:#808080;">ASCII &quot;OS mode.&quot;,CR,CR</span></div>
<div class="m" style="left:6px;top:81px;"><span style="color:#808080;">0019F0C0</span></div>
<div class="m" style="left:85px;top:81px;"><span style="color:#808080;">00650064</span></div>
<div class="m" style="left:6px;top:97px;"><span style="color:#808080;">0019F0C4</span></div>
<div class="m" style="left:85px;top:97px;"><span style="color:#808080;">4666464B</span></div>
<div class="m" style="left:6px;top:113px;"><span style="color:#808080;">0019F0C8</span></div>
<div class="m" style="left:85px;top:113px;"><span style="color:#808080;">00000BD0</span></div>
<div class="m" style="left:6px;top:129px;"><span style="color:#808080;">0019F0CC</span></div>
<div class="m" style="left:85px;top:129px;"><span style="color:#808080;">02000002</span></div>
<div class="m" style="left:157px;top:129px;"><span style="color:#808080;">cstrike.02000002</span></div>
<div class="m" style="left:6px;top:145px;"><span style="color:#808080;">0019F0D0</span></div>
<div class="m" style="left:85px;top:145px;"><span style="color:#808080;">36AE5083</span></div>
<div class="m" style="left:6px;top:161px;"><span style="color:#808080;">0019F0D4</span></div>
<div class="m" style="left:85px;top:161px;"><span style="color:#808080;">4A00C882</span></div>
<div class="m" style="left:6px;top:177px;"><span style="color:#808080;">0019F0D8</span></div>
<div class="m" style="left:85px;top:177px;"><span style="color:#808080;">00025875</span></div>
<div class="m" style="left:6px;top:193px;"><span style="color:#808080;">0019F0DC</span></div>
<div class="m" style="left:85px;top:193px;"><span style="color:#808080;">AB0000AB</span></div>
<div class="m" style="left:6px;top:209px;"><span style="color:#808080;">0019F0E0</span></div>
<div class="m" style="left:85px;top:209px;"><span style="color:#808080;">0019F120</span></div>
<div class="m" style="left:6px;top:225px;"><span style="color:#808080;">0019F0E4</span></div>
<div class="m" style="left:85px;top:225px;"><span style="color:#808080;">00000001</span></div>
<div class="m" style="left:6px;top:241px;"><span style="color:#808080;">0019F0E8</span></div>
<div class="m" style="left:85px;top:241px;"><span style="color:#808080;">0019F10C</span></div>
<div class="m" style="left:6px;top:257px;"><span style="color:#808080;">0019F0EC</span></div>
<div class="m" style="left:85px;top:257px;"><span style="color:#808080;">02000002</span></div>
<div class="m" style="left:157px;top:257px;"><span style="color:#808080;">cstrike.02000002</span></div>
<div class="m" style="left:6px;top:273px;"><span style="color:#808080;">0019F0F0</span></div>
<div class="m" style="left:85px;top:273px;"><span style="color:#808080;">01D7D7ED</span></div>
<div class="m" style="left:157px;top:273px;"><span style="color:#808080;">cstrike.01D7D7ED</span></div>
</div>
<div style="position:absolute;left:977px;top:466px;width:17px;height:282px;background:#f0f0f0;"></div>
<div style="position:absolute;left:978px;top:712px;width:16px;height:17px;background:#cdcdcd;"></div>
<svg style="position:absolute;left:981px;top:472px" width="9" height="7" viewBox="0 0 9 7"><path d="M1 5.5 L4.5 2 L8 5.5" stroke="#5a5a5a" stroke-width="2.1" fill="none"/></svg>
<svg style="position:absolute;left:981px;top:736px" width="9" height="7" viewBox="0 0 9 7"><path d="M1 1.5 L4.5 5 L8 1.5" stroke="#5a5a5a" stroke-width="2.1" fill="none"/></svg>
<div style="position:absolute;left:36px;top:750px;width:960px;height:26px;background:#f0f0f0;"></div>
<div class="s" style="left:41px;top:756px;font-size:12px;line-height:17px;color:#000;">Command</div>
<div style="position:absolute;left:98px;top:753px;width:199px;height:21px;background:#fff;border-top:1px solid #a0a0a0;border-left:1px solid #a0a0a0;border-bottom:1px solid #fff;"></div>
<div class="s" style="left:102px;top:756px;font-size:12.2px;line-height:17px;color:#000;">dd 05862F1C</div>
<div style="position:absolute;left:279px;top:754px;width:17px;height:19px;background:#f0f0f0;border:1px solid;border-color:#fff #808080 #808080 #fff;"></div>
<svg style="position:absolute;left:283px;top:761px" width="9" height="5" viewBox="0 0 9 5"><path d="M0 0 H9 L4.5 5Z" fill="#000"/></svg>
<div style="position:absolute;left:300px;top:753px;width:694px;height:19px;background:#f0f0f0;border-top:1px solid #a0a0a0;border-left:1px solid #a0a0a0;border-bottom:1px solid #fff;border-right:1px solid #fff;"></div>
<div style="position:absolute;left:36px;top:776px;width:960px;height:19px;background:#f0f0f0;"></div>
<div style="position:absolute;left:37px;top:777px;width:916px;height:17px;background:#c0c0c0;border-top:1px solid #808080;border-left:1px solid #808080;border-bottom:1px solid #fff;border-right:1px solid #fff;"></div>
<div style="position:absolute;left:953px;top:777px;width:42px;height:17px;background:#c0c0c0;border-top:1px solid #808080;border-left:1px solid #808080;border-bottom:1px solid #fff;border-right:1px solid #fff;"></div>
<div class="s" style="left:41px;top:778px;font-size:12.5px;line-height:16px;color:#000;">硬件断点</div>
<div class="s" style="left:99px;top:778px;font-family:'Liberation Mono',monospace;font-size:11.67px;line-height:16px;color:#000;">2</div>
<div class="s" style="left:114px;top:778px;font-size:12.5px;line-height:16px;color:#000;">位于</div>
<div class="s" style="left:146px;top:778px;font-family:'Liberation Mono',monospace;font-size:11.67px;line-height:16px;color:#000;">ntdll.77218240 - EIP</div>
<div class="s" style="left:294px;top:778px;font-size:12.5px;line-height:16px;color:#000;">指向下一条指令</div>
<div class="s" style="left:885px;top:801px;font-size:18px;line-height:22px;color:#d0d0d0;text-shadow:1px 1px 1px #777;">CSDN <span style="font-size:19.5px">@韩曙亮</span></div>
</body></html>
